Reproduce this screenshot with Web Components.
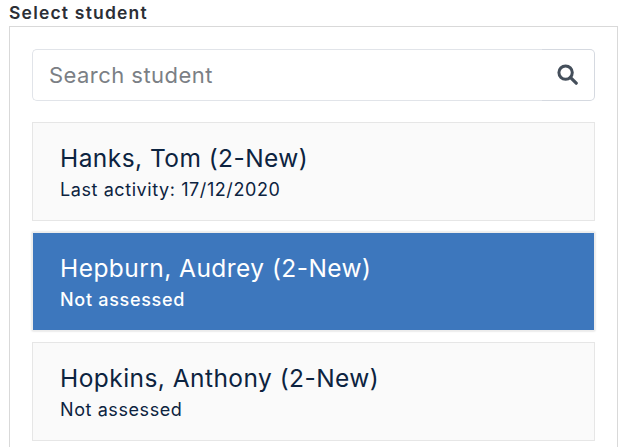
<!DOCTYPE html>
<html lang="en">
<head>
<meta charset="utf-8">
<title>Select student</title>
<style>
  html, body { margin: 0; height: 100%; overflow: hidden; background: #fff; }
  body { font-family: Inter, "Open Sans", sans-serif; color: #0c2340; }
</style>
</head>
<body>
<student-picker label="Select student">
  <student-search placeholder="Search student"></student-search>
  <student-card name="Hanks, Tom (2-New)">Last activity: 17/12/2020</student-card>
  <student-card name="Hepburn, Audrey (2-New)" selected>Not assessed</student-card>
  <student-card name="Hopkins, Anthony (2-New)">Not assessed</student-card>
</student-picker>

<script>
// panel with a label on top, children stack inside
class StudentPicker extends HTMLElement {
  constructor() {
    super();
    this.attachShadow({ mode: "open" }).innerHTML = `
      <style>
        :host { display: block; padding: 0 5px 0 9px; }
        .label { font-size: 17.5px; line-height: 25px; height: 26px; font-weight: 600; color: #2b2f36; letter-spacing: 1.2px; }
        .panel {
          border: 1px solid #d9d9d9;
          border-bottom: 0;
          padding: 22px 22px 0 22px;
          display: flex;
          flex-direction: column;
          height: 440px;
          box-sizing: border-box;
        }
      </style>
      <div class="label"></div>
      <div class="panel"><slot></slot></div>`;
    this.shadowRoot.querySelector(".label").textContent = this.getAttribute("label");
  }
}

// input group: the button half has a slightly darker border
class StudentSearch extends HTMLElement {
  constructor() {
    super();
    this.attachShadow({ mode: "open" }).innerHTML = `
      <style>
        :host { display: block; margin-bottom: 21px; }
        .box { height: 52px; display: flex; }
        input {
          flex: 1;
          min-width: 0;
          box-sizing: border-box;
          border: 1px solid #e1e4e9;
          border-right: 0;
          border-radius: 5px 0 0 5px;
          outline: 0;
          padding: 0 0 0 16px;
          background: none;
          font: 400 22px Inter, "Open Sans", sans-serif;
          letter-spacing: .45px;
          color: #333;
        }
        input::placeholder { color: #7b7f85; opacity: 1; }
        .btn {
          width: 53px;
          box-sizing: border-box;
          border: 1px solid #d5d9e0;
          border-left: 0;
          border-radius: 0 5px 5px 0;
          display: flex;
          align-items: center;
          justify-content: flex-end;
          padding: 0 16px 2px 0;
        }
        svg { width: 21px; height: 21px; display: block; }
      </style>
      <div class="box">
        <input type="text">
        <div class="btn">
          <svg viewBox="0 0 21 21" aria-hidden="true">
            <circle cx="8.6" cy="8.6" r="6.7" fill="none" stroke="#454f5b" stroke-width="3"/>
            <path d="M13.6 13.6l5.6 5.6" fill="none" stroke="#454f5b" stroke-width="3.2" stroke-linecap="round"/>
          </svg>
        </div>
      </div>`;
    this.shadowRoot.querySelector("input").placeholder = this.getAttribute("placeholder");
  }
}

class StudentCard extends HTMLElement {
  constructor() {
    super();
    this.attachShadow({ mode: "open" }).innerHTML = `
      <style>
        :host {
          display: block;
          height: 99px;
          box-sizing: border-box;
          margin-bottom: 11px;
          padding: 20px 27px 0;
          background: #fafafa;
          border: 1px solid #e6e6e6;
          color: #0c2340;
        }
        :host([selected]) {
          background: #3d77bd;
          color: #fff;
          border-color: #ececec;
          box-shadow: 0 0 2px #ccc;
        }
        .name { font-size: 24.5px; line-height: 30px; letter-spacing: .45px; }
        .sub { font-size: 18px; line-height: 24px; margin-top: 5px; letter-spacing: .58px; }
        :host([selected]) .sub { font-weight: 500; letter-spacing: .7px; }
      </style>
      <div class="name"></div>
      <div class="sub"><slot></slot></div>`;
    this.shadowRoot.querySelector(".name").textContent = this.getAttribute("name");
  }
}

customElements.define("student-picker", StudentPicker);
customElements.define("student-search", StudentSearch);
customElements.define("student-card", StudentCard);
</script>
</body>
</html>
